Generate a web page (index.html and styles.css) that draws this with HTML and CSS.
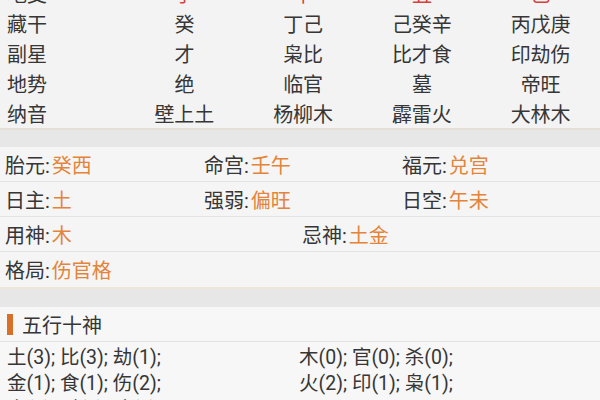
FILE: index.html
```html
<!DOCTYPE html>
<html lang="zh">
<head>
<meta charset="utf-8">
<link rel="stylesheet" href="styles.css">
</head>
<body>
<div class="page">
  <section class="pillars">
    <div class="prow">
      <div class="plabel">地支</div>
      <div class="pcell red">子</div>
      <div class="pcell red">午</div>
      <div class="pcell red">丑</div>
      <div class="pcell red">巳</div>
    </div>
    <div class="prow">
      <div class="plabel">藏干</div>
      <div class="pcell">癸</div>
      <div class="pcell">丁己</div>
      <div class="pcell">己癸辛</div>
      <div class="pcell">丙戊庚</div>
    </div>
    <div class="prow">
      <div class="plabel">副星</div>
      <div class="pcell">才</div>
      <div class="pcell">枭比</div>
      <div class="pcell">比才食</div>
      <div class="pcell">印劫伤</div>
    </div>
    <div class="prow">
      <div class="plabel">地势</div>
      <div class="pcell">绝</div>
      <div class="pcell">临官</div>
      <div class="pcell">墓</div>
      <div class="pcell">帝旺</div>
    </div>
    <div class="prow">
      <div class="plabel">纳音</div>
      <div class="pcell">壁上土</div>
      <div class="pcell">杨柳木</div>
      <div class="pcell">霹雷火</div>
      <div class="pcell">大林木</div>
    </div>
  </section>

  <section class="info">
    <div class="irow three">
      <div>胎元:<span class="val">癸西</span></div>
      <div>命宫:<span class="val">壬午</span></div>
      <div>福元:<span class="val">兑宫</span></div>
    </div>
    <div class="irow three">
      <div>日主:<span class="val">土</span></div>
      <div>强弱:<span class="val">偏旺</span></div>
      <div>日空:<span class="val">午未</span></div>
    </div>
    <div class="irow two">
      <div>用神:<span class="val">木</span></div>
      <div>忌神:<span class="val">土金</span></div>
    </div>
    <div class="irow two">
      <div>格局:<span class="val">伤官格</span></div>
      <div></div>
    </div>
  </section>

  <section class="wuxing">
    <div class="whead"><span class="bar"></span>五行十神</div>
    <div class="wbody">
      <div>土(3); 比(3); 劫(1);</div>
      <div>木(0); 官(0); 杀(0);</div>
      <div>金(1); 食(1); 伤(2);</div>
      <div>火(2); 印(1); 枭(1);</div>
      <div>水(2); 财(1); 才(2);</div>
      <div></div>
    </div>
  </section>
</div>
</body>
</html>
```

FILE: styles.css
```css
html, body {
  margin: 0;
  padding: 0;
  background: #e7e7e7;
}
body {
  width: 600px;
  height: 400px;
  overflow: hidden;
  font-family: Roboto, "Noto Sans CJK SC", sans-serif;
  color: #363636;
}
.page {
  display: flex;
  flex-direction: column;
}
.pillars {
  margin-top: -22px;
  background: #f3f3f3;
  border-bottom: 2px solid #e4e0d8;
}
.prow {
  display: grid;
  grid-template-columns: 125px repeat(4, 1fr);
  height: 30px;
  align-items: center;
  font-size: 20px;
}
.plabel {
  padding-left: 7px;
}
.pcell {
  text-align: center;
}
.red {
  color: #d8403c;
}
.info {
  margin-top: 17px;
  background: #f5f5f5;
  border-bottom: 2px solid #ebe6d8;
}
.irow {
  display: grid;
  height: 35px;
  align-items: center;
  font-size: 20px;
  padding-left: 5px;
  border-bottom: 1px solid #e3e3e3;
  box-sizing: border-box;
}
.irow:last-child {
  border-bottom: none;
}
.three {
  grid-template-columns: 199px 198px 1fr;
}
.two {
  grid-template-columns: 297px 1fr;
}
.val {
  color: #e3843a;
  margin-left: 2px;
}
.wuxing {
  margin-top: 18px;
  background: #f7f7f7;
}
.whead {
  height: 35px;
  display: flex;
  align-items: center;
  font-size: 20px;
  border-bottom: 1px solid #e3e3e3;
  box-sizing: border-box;
}
.bar {
  width: 6px;
  height: 21px;
  background: #d9702a;
  margin-left: 7px;
  margin-right: 9px;
}
.wbody {
  display: grid;
  grid-template-columns: 292px 1fr;
  padding: 3px 0 0 7px;
  font-size: 19.5px;
  line-height: 26px;
}
```
